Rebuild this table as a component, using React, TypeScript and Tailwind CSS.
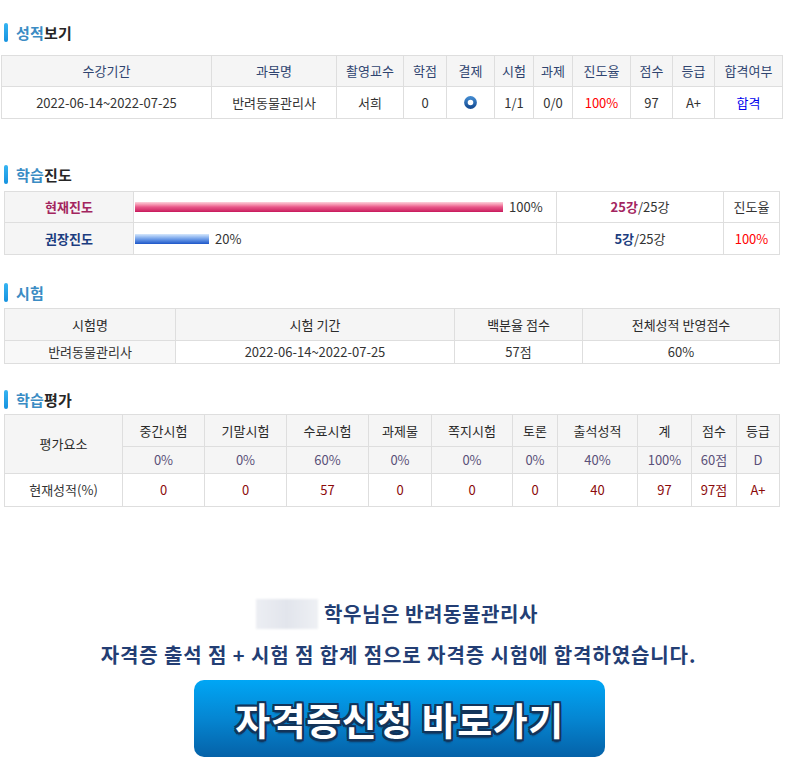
import React from "react";

const F = '"Noto Sans CJK KR", "Noto Sans", sans-serif';

function Title({ blue, dark }: { blue: string; dark?: string }) {
  return (
    <div className="flex h-[20px] items-center pl-[4px]">
      <div className="h-[19px] w-[4px] rounded-full bg-gradient-to-b from-[#35b4f2] to-[#1492df]" />
      <div className="ml-[8px] text-[15px] font-bold leading-none tracking-[0.2px]">
        <span className="text-[#3b8cc4]">{blue}</span>
        {dark && <span className="text-[#262626]">{dark}</span>}
      </div>
    </div>
  );
}

const th = "border border-[#dedede] bg-[#f5f5f5] text-center font-normal p-0";
const td = "border border-[#dedede] text-center p-0";

export default function App() {
  return (
    <div className="w-[794px] h-[775px] bg-white text-[13px] text-[#333]" style={{ fontFamily: F }}>
      {/* 성적보기 */}
      <div className="pt-[22px]">
        <Title blue="성적" dark="보기" />
      </div>
      <table className="ml-[1px] mt-[13px] w-[781px] table-fixed border-collapse">
        <colgroup>
          <col className="w-[210px]" />
          <col className="w-[125px]" />
          <col className="w-[67px]" />
          <col className="w-[43px]" />
          <col className="w-[48px]" />
          <col className="w-[39px]" />
          <col className="w-[39px]" />
          <col className="w-[58px]" />
          <col className="w-[42px]" />
          <col className="w-[42px]" />
          <col className="w-[68px]" />
        </colgroup>
        <thead>
          <tr className="h-[31px] text-[#2f4470]">
            {["수강기간", "과목명", "촬영교수", "학점", "결제", "시험", "과제", "진도율", "점수", "등급", "합격여부"].map((h) => (
              <th key={h} className={th}>{h}</th>
            ))}
          </tr>
        </thead>
        <tbody>
          <tr className="h-[32px]">
            <td className={td}>2022-06-14~2022-07-25</td>
            <td className={td}>반려동물관리사</td>
            <td className={td}>서희</td>
            <td className={td}>0</td>
            <td className={td}>
              <div className="flex justify-center">
                <svg width="13" height="13" viewBox="0 0 13 13">
                  <defs>
                    <linearGradient id="rg" x1="0" y1="0" x2="0" y2="1">
                      <stop offset="0" stopColor="#3f86cc" />
                      <stop offset="1" stopColor="#174f96" />
                    </linearGradient>
                  </defs>
                  <circle cx="6.5" cy="6.5" r="4.6" fill="none" stroke="url(#rg)" strokeWidth="3.6" />
                </svg>
              </div>
            </td>
            <td className={td}>1/1</td>
            <td className={td}>0/0</td>
            <td className={`${td} text-[#ff0000]`}>100%</td>
            <td className={td}>97</td>
            <td className={td}>A+</td>
            <td className={`${td} text-[#0000ee]`}>합격</td>
          </tr>
        </tbody>
      </table>

      {/* 학습진도 */}
      <div className="mt-[45px]">
        <Title blue="학습" dark="진도" />
      </div>
      <table className="ml-[4px] mt-[7px] w-[775px] table-fixed border-collapse">
        <colgroup>
          <col className="w-[129px]" />
          <col className="w-[423px]" />
          <col className="w-[167px]" />
          <col className="w-[56px]" />
        </colgroup>
        <tbody>
          <tr className="h-[31px]">
            <td className={`${td} bg-[#f5f5f5] font-bold text-[#a3255f]`}>현재진도</td>
            <td className={`${td} text-left`}>
              <div className="flex items-center pl-[1px]">
                <div className="h-[10px] w-[368px] bg-gradient-to-b from-[#fcd2dc] via-[#e8578a] to-[#c8135c]" />
                <span className="ml-[6px]">100%</span>
              </div>
            </td>
            <td className={td}>
              <span className="font-bold text-[#a3255f]">25강</span>/25강
            </td>
            <td className={td}>진도율</td>
          </tr>
          <tr className="h-[32px]">
            <td className={`${td} bg-[#f5f5f5] font-bold text-[#1c3d80]`}>권장진도</td>
            <td className={`${td} text-left`}>
              <div className="flex items-center pl-[1px]">
                <div className="h-[10px] w-[74px] bg-gradient-to-b from-[#d6e8fc] via-[#6f9ee8] to-[#1d55c8]" />
                <span className="ml-[6px]">20%</span>
              </div>
            </td>
            <td className={td}>
              <span className="font-bold text-[#1c3d80]">5강</span>/25강
            </td>
            <td className={`${td} text-[#ff0000]`}>100%</td>
          </tr>
        </tbody>
      </table>

      {/* 시험 */}
      <div className="mt-[27px]">
        <Title blue="시험" />
      </div>
      <table className="ml-[4px] mt-[6px] w-[775px] table-fixed border-collapse">
        <colgroup>
          <col className="w-[171px]" />
          <col className="w-[279px]" />
          <col className="w-[128px]" />
          <col className="w-[197px]" />
        </colgroup>
        <thead>
          <tr className="h-[32px] text-[#2a2a2a]">
            <th className={`${th} font-medium`}>시험명</th>
            <th className={`${th} font-medium`}>시험 기간</th>
            <th className={`${th} font-medium`}>백분율 점수</th>
            <th className={`${th} font-medium`}>전체성적 반영점수</th>
          </tr>
        </thead>
        <tbody>
          <tr className="h-[23px]">
            <td className={`${td} bg-[#f8f8f8]`}>반려동물관리사</td>
            <td className={td}>2022-06-14~2022-07-25</td>
            <td className={td}>57점</td>
            <td className={td}>60%</td>
          </tr>
        </tbody>
      </table>

      {/* 학습평가 */}
      <div className="mt-[25px]">
        <Title blue="학습" dark="평가" />
      </div>
      <table className="ml-[4px] mt-[5px] w-[775px] table-fixed border-collapse">
        <colgroup>
          <col className="w-[118px]" />
          <col className="w-[82px]" />
          <col className="w-[82px]" />
          <col className="w-[82px]" />
          <col className="w-[63px]" />
          <col className="w-[81px]" />
          <col className="w-[45px]" />
          <col className="w-[80px]" />
          <col className="w-[54px]" />
          <col className="w-[45px]" />
          <col className="w-[43px]" />
        </colgroup>
        <tbody>
          <tr className="h-[32px] text-[#2a2a2a]">
            <td rowSpan={2} className={`${th} font-medium`}>평가요소</td>
            {["중간시험", "기말시험", "수료시험", "과제물", "쪽지시험", "토론", "출석성적", "계", "점수", "등급"].map((h) => (
              <td key={h} className={`${th} font-medium`}>{h}</td>
            ))}
          </tr>
          <tr className="h-[27px] text-[#5a5078]">
            {["0%", "0%", "60%", "0%", "0%", "0%", "40%", "100%", "60점", "D"].map((v, i) => (
              <td key={i} className={th}>{v}</td>
            ))}
          </tr>
          <tr className="h-[33px]">
            <td className={td}>현재성적(%)</td>
            {["0", "0", "57", "0", "0", "0", "40", "97", "97점", "A+"].map((v, i) => (
              <td key={i} className={`${td} text-[#8b0a0a]`}>{v}</td>
            ))}
          </tr>
        </tbody>
      </table>

      {/* 결과 문구 */}
      <div className="mt-[92px] flex items-center justify-center text-[20px] font-bold leading-none tracking-[0.6px] text-[#233e74]">
        <div className="h-[30px] w-[62px] bg-gradient-to-r from-[#eceef3] via-[#e2e5ec] to-[#eef0f4] blur-[1px]" />
        <span className="ml-[6px]">학우님은 반려동물관리사</span>
      </div>
      <div className="mt-[13px] flex h-[26px] items-center justify-center pl-[3px] text-[20px] font-bold leading-none tracking-[0.9px] text-[#233e74]">
        자격증 출석 점 + 시험 점 합계 점으로 자격증 시험에 합격하였습니다.
      </div>
      <div className="mt-[12px] flex justify-center pl-[5px]">
        <div className="flex h-[77px] w-[411px] items-center justify-center rounded-[10px] bg-gradient-to-b from-[#00a6f5] via-[#0586d2] to-[#0562a8]">
          <span className="text-[38px] font-bold leading-none tracking-[0.5px] text-white [text-shadow:2px_0_0_#12345a,-2px_0_0_#12345a,0_2px_0_#12345a,0_-2px_0_#12345a,2px_2px_0_#12345a,-2px_-2px_0_#12345a,2px_-2px_0_#12345a,-2px_2px_0_#12345a,0_3px_2px_#12345a]">
            자격증신청 바로가기
          </span>
        </div>
      </div>
    </div>
  );
}
